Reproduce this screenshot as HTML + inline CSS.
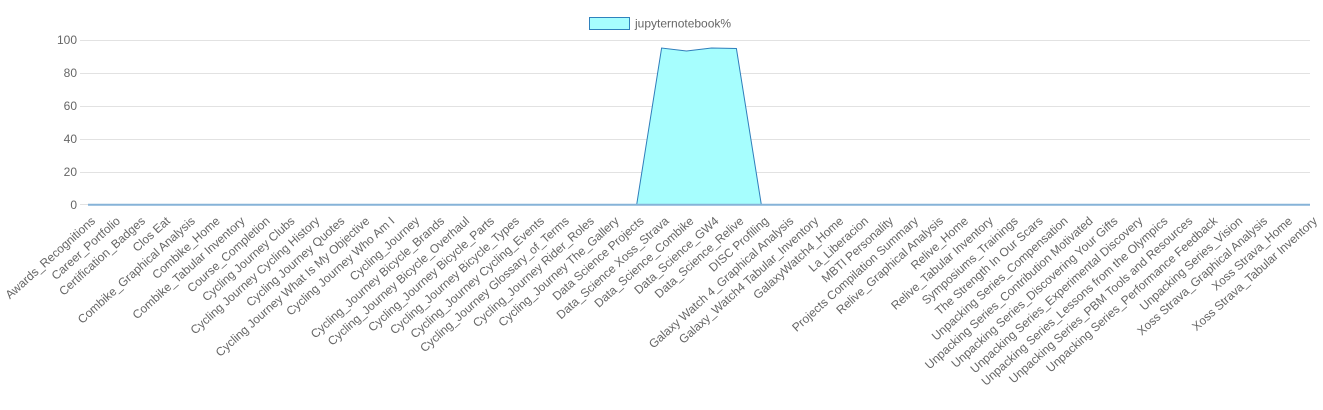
<!DOCTYPE html>
<html><head><meta charset="utf-8"><style>
html,body{margin:0;padding:0;background:#fff;width:1323px;height:410px;overflow:hidden;font-family:"Liberation Sans",Arial,sans-serif}
</style></head><body>
<svg width="1323" height="410" xmlns="http://www.w3.org/2000/svg" font-family="Liberation Sans, Arial, sans-serif" font-size="12" fill="#666">
<g stroke="#e2e2e2" stroke-width="1">
<line x1="80" y1="40.5" x2="1310" y2="40.5"/>
<line x1="80" y1="73.5" x2="1310" y2="73.5"/>
<line x1="80" y1="106.5" x2="1310" y2="106.5"/>
<line x1="80" y1="139.5" x2="1310" y2="139.5"/>
<line x1="80" y1="172.5" x2="1310" y2="172.5"/>
<line x1="80" y1="204.5" x2="1310" y2="204.5"/>
</g>
<g text-anchor="end">
<text x="77" y="44">100</text><text x="77" y="77">80</text><text x="77" y="110">60</text>
<text x="77" y="143">40</text><text x="77" y="176">20</text><text x="77" y="209">0</text>
</g>
<rect x="589.5" y="17.5" width="40" height="12" fill="#a6fefe" stroke="#2f82bd"/>
<text x="635" y="27.5">jupyternotebook%</text>
<polygon points="88,204.5 636.7,204.5 661.6,48 686.5,51 711.5,48 736.4,48.5 761.3,204.5 1310,204.5" fill="#a6fefe"/>
<polyline points="88,204.5 636.7,204.5 661.6,48 686.5,51 711.5,48 736.4,48.5 761.3,204.5 1310,204.5" fill="none" stroke="#2f7dbb" stroke-width="1"/>
<line x1="88" y1="204.8" x2="1310" y2="204.8" stroke="#86b3d8" stroke-width="2"/>
<g id="lbl"></g>
</svg>
<script>
var L=["Awards_Recognitions","Career_Portfolio","Certification_Badges","Clos Eat","Combike_Graphical Analysis","Combike_Home","Combike_Tabular Inventory","Course_Completion","Cycling Journey Clubs","Cycling Journey Cycling History","Cycling Journey Quotes","Cycling Journey What Is My Objective","Cycling Journey Who Am I","Cycling_Journey","Cycling_Journey Bicycle_Brands","Cycling_Journey Bicycle_Overhaul","Cycling_Journey Bicycle_Parts","Cycling_Journey Bicycle_Types","Cycling_Journey Cycling_Events","Cycling_Journey Glossary_of_Terms","Cycling_Journey Rider_Roles","Cycling_Journey The_Gallery","Data Science Projects","Data_Science Xoss_Strava","Data_Science_Combike","Data_Science_GW4","Data_Science_Relive","DISC Profiling","Galaxy Watch 4_Graphical Analysis","Galaxy_Watch4 Tabular_Inventory","GalaxyWatch4_Home","La_Liberacion","MBTI Personality","Projects Compilation Summary","Relive_Graphical Analysis","Relive_Home","Relive_Tabular Inventory","Symposiums_Trainings","The Strength In Our Scars","Unpacking Series_Compensation","Unpacking Series_Contribution Motivated","Unpacking Series_Discovering Your Gifts","Unpacking Series_Experimental Discovery","Unpacking Series_Lessons from the Olympics","Unpacking Series_PBM Tools and Resources","Unpacking Series_Performance Feedback","Unpacking Series_Vision","Xoss Strava_Graphical Analysis","Xoss Strava_Home","Xoss Strava_Tabular Inventory"];
var g=document.getElementById("lbl"),s="";
for(var i=0;i<L.length;i++){var x=88+i*(1222/49)+8,y=222;
s+='<text text-anchor="end" transform="translate('+x.toFixed(1)+','+y+') rotate(-42)">'+L[i]+'</text>';}
g.innerHTML=s;
</script>
</body></html>
